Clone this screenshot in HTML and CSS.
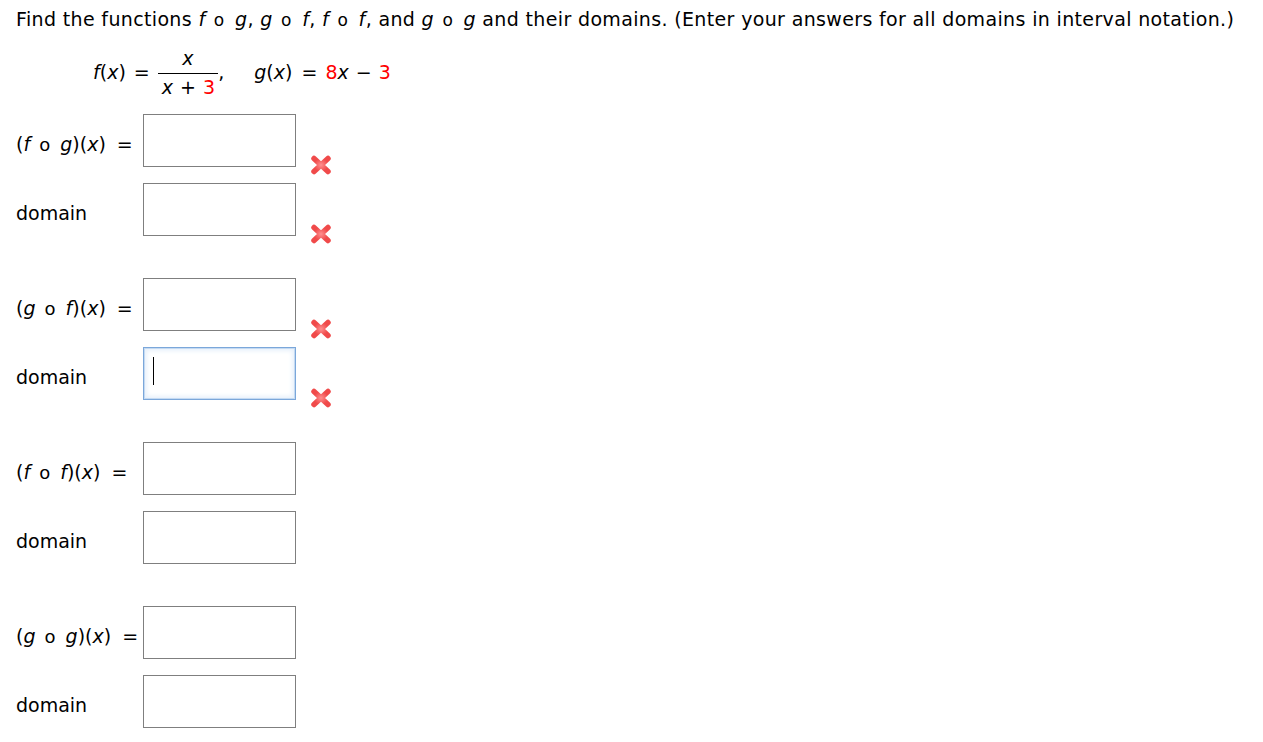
FILE: index.html
```html
<!DOCTYPE html>
<html>
<head>
<meta charset="utf-8">
<link rel="stylesheet" href="styles.css">
</head>
<body>
<div class="page">
  <p class="intro">Find the functions <i>f</i> <span class="op">o</span> <i>g</i>, <i>g</i> <span class="op">o</span> <i>f</i>, <i>f</i> <span class="op">o</span> <i>f</i>, and <i>g</i> <span class="op">o</span> <i>g</i> and their domains. (Enter your answers for all domains in interval notation.)</p>
  <p class="given"><i>f</i>(<i>x</i>) <span class="eq">=</span> <span class="frac"><span class="num"><i>x</i></span><span class="den"><i>x</i> + <span class="red">3</span></span></span><span class="comma">,</span> <span class="gx"><i>g</i>(<i>x</i>) <span class="eq eq2">=</span> <span class="red">8</span><i>x</i> <span class="minus">&minus;</span> <span class="red">3</span></span></p>

  <div class="group">
    <div class="row">
      <span class="label">(<i>f</i> <span class="op">o</span> <i>g</i>)(<i>x</i>) <span class="eq">=</span></span>
      <div class="box"></div>
      <svg class="wrong" width="22" height="20" viewBox="0 0 22 20"><defs><radialGradient id="g1" cx="50%" cy="50%" r="50%"><stop offset="0" stop-color="#ff9090"/><stop offset="1" stop-color="#f04a4a"/></radialGradient></defs><path d="M4 3.5 L18 16.5 M18 3.5 L4 16.5" stroke="url(#g1)" stroke-width="5.5" stroke-linecap="round" fill="none"/></svg>
    </div>
    <div class="row">
      <span class="label">domain</span>
      <div class="box"></div>
      <svg class="wrong" width="22" height="20" viewBox="0 0 22 20"><path d="M4 3.5 L18 16.5 M18 3.5 L4 16.5" stroke="url(#g1)" stroke-width="5.5" stroke-linecap="round" fill="none"/></svg>
    </div>
  </div>

  <div class="group">
    <div class="row">
      <span class="label">(<i>g</i> <span class="op">o</span> <i>f</i>)(<i>x</i>) <span class="eq">=</span></span>
      <div class="box"></div>
      <svg class="wrong" width="22" height="20" viewBox="0 0 22 20"><path d="M4 3.5 L18 16.5 M18 3.5 L4 16.5" stroke="url(#g1)" stroke-width="5.5" stroke-linecap="round" fill="none"/></svg>
    </div>
    <div class="row">
      <span class="label">domain</span>
      <div class="box focused"><span class="caret"></span></div>
      <svg class="wrong" width="22" height="20" viewBox="0 0 22 20"><path d="M4 3.5 L18 16.5 M18 3.5 L4 16.5" stroke="url(#g1)" stroke-width="5.5" stroke-linecap="round" fill="none"/></svg>
    </div>
  </div>

  <div class="group">
    <div class="row">
      <span class="label">(<i>f</i> <span class="op">o</span> <i>f</i>)(<i>x</i>) <span class="eq">=</span></span>
      <div class="box"></div>
    </div>
    <div class="row">
      <span class="label">domain</span>
      <div class="box"></div>
    </div>
  </div>

  <div class="group">
    <div class="row">
      <span class="label">(<i>g</i> <span class="op">o</span> <i>g</i>)(<i>x</i>) <span class="eq">=</span></span>
      <div class="box"></div>
    </div>
    <div class="row">
      <span class="label">domain</span>
      <div class="box"></div>
    </div>
  </div>
</div>
</body>
</html>
```

FILE: styles.css
```css
html, body {
  margin: 0;
  padding: 0;
  background: #ffffff;
}
.page {
  font-family: "DejaVu Sans", Verdana, sans-serif;
  font-size: 19px;
  line-height: 22px;
  color: #000;
  padding: 8px 16px 0 16px;
}
.intro {
  margin: 0;
  white-space: nowrap;
  letter-spacing: 0.35px;
}
.op {
  font-size: 18px;
  margin: 0 4px 0 3px;
}
.intro .op {
  font-size: 17px;
  margin: 0 4px 0 2px;
}
.eq {
  margin: 0 2px;
}
.label .eq {
  margin: 0 0 0 5px;
}
.eq2 {
  margin: 0 2px 0 3px;
}
.red {
  color: #ff0000;
}
.given {
  margin: 18px 0 0 0;
  padding-left: 77px;
  white-space: nowrap;
}
.frac {
  display: inline-flex;
  flex-direction: column;
  align-items: center;
  vertical-align: 14px;
  margin-left: 0;
}
.num {
  line-height: 18px;
  padding-bottom: 6px;
}
.den {
  border-top: 1px solid #000;
  padding: 2px 3px 0 4px;
  line-height: 22px;
  word-spacing: 1px;
}
.comma {
  margin-right: 24px;
}
.minus {
  margin: 0 1px;
}
.group {
  margin-top: 16px;
  display: flex;
  flex-direction: column;
  gap: 16px;
}
.group + .group {
  margin-top: 42px;
}
.row {
  display: flex;
  align-items: flex-start;
  height: 53px;
}
.label {
  width: 127px;
  margin-top: 19px;
  white-space: nowrap;
}
.box {
  width: 153px;
  height: 53px;
  box-sizing: border-box;
  border: 1px solid #7f7f7f;
  background: #fff;
  flex: none;
}
.box.focused {
  border-color: #7ba7da;
  box-shadow: inset 0 0 0 1px #c4daf2, inset 0 0 4px 3px #e8f1fb;
  padding: 9px 0 0 9px;
}
.caret {
  display: block;
  width: 1px;
  height: 28px;
  background: #000;
}
.wrong {
  margin-left: 14px;
  margin-top: 41px;
  flex: none;
}
```
